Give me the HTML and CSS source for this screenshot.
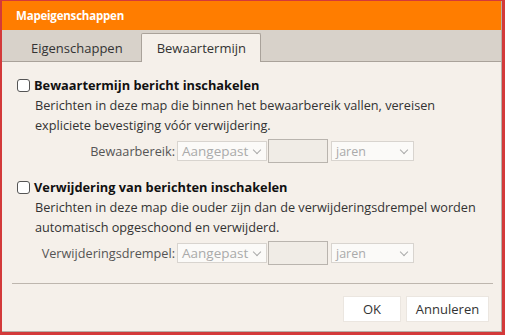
FILE: index.html
```html
<!DOCTYPE html>
<html>
<head>
<meta charset="utf-8">
<link rel="stylesheet" href="styles.css">
</head>
<body>
<div class="frame">
  <div class="dialog">
    <div class="titlebar">Mapeigenschappen</div>
    <div class="tabs">
      <div class="tab">Eigenschappen</div>
      <div class="tab active">Bewaartermijn</div>
    </div>
    <div class="content">
      <div class="section">
        <label class="check"><span class="box"></span><span class="check-label">Bewaartermijn bericht inschakelen</span></label>
        <p class="desc">Berichten in deze map die binnen het bewaarbereik vallen, vereisen expliciete bevestiging vóór verwijdering.</p>
        <div class="row row-1">
          <span class="row-label">Bewaarbereik:</span>
          <span class="select sel-a">Aangepast<span class="chev"></span></span>
          <span class="input"></span>
          <span class="select sel-b">jaren<span class="chev"></span></span>
        </div>
      </div>
      <div class="section">
        <label class="check"><span class="box"></span><span class="check-label">Verwijdering van berichten inschakelen</span></label>
        <p class="desc">Berichten in deze map die ouder zijn dan de verwijderingsdrempel worden automatisch opgeschoond en verwijderd.</p>
        <div class="row row-2">
          <span class="row-label">Verwijderingsdrempel:</span>
          <span class="select sel-a">Aangepast<span class="chev"></span></span>
          <span class="input"></span>
          <span class="select sel-b">jaren<span class="chev"></span></span>
        </div>
      </div>
    </div>
    <div class="footer">
      <button class="btn btn-ok">OK</button>
      <button class="btn btn-cancel">Annuleren</button>
    </div>
  </div>
</div>
</body>
</html>
```

FILE: styles.css
```css
* { box-sizing: border-box; }
html, body { margin: 0; padding: 0; }
body {
  width: 505px;
  height: 335px;
  font-family: "Open Sans", "Noto Sans", sans-serif;
  font-size: 13px;
  color: #222;
  background: #d23a3a;
}
.frame {
  width: 505px;
  height: 335px;
  border-style: solid;
  border-color: #d33a3a;
  border-width: 1px 2px 2px 2px;
}
.dialog {
  width: 500px;
  height: 331px;
  background: #f5f0ea;
  border-right: 1px solid #b8b0a8;
  border-bottom: 1px solid #b8b0a8;
  display: flex;
  flex-direction: column;
}
.titlebar {
  height: 29px;
  background: #ff7d00;
  color: #fff;
  font-weight: bold;
  font-size: 11.5px;
  padding-left: 14px;
  display: flex;
  align-items: center;
  letter-spacing: -0.2px;
}
.tabs {
  height: 32px;
  background: #d8d2ca;
  border-bottom: 1px solid #a9a29a;
  display: flex;
  align-items: flex-end;
  padding-left: 8px;
  gap: 9px;
}
.tab {
  height: 29px;
  font-size: 13px;
  color: #333;
  display: flex;
  align-items: center;
  margin-bottom: -1px;
  border: 1px solid transparent;
  border-bottom: none;
}
.tab:first-child { padding-left: 20px; padding-right: 8px; }
.tab.active {
  background: #f5f0ea;
  border-color: #a9a29a;
  border-radius: 2px 2px 0 0;
  padding: 0 14px 0 15px;
}
.content {
  flex: 1;
  padding: 13px 8px 0 15px;
  display: flex;
  flex-direction: column;
  gap: 14px;
}
.check {
  display: flex;
  align-items: center;
  height: 20px;
}
.box {
  width: 13px;
  height: 13px;
  border: 1px solid #555;
  border-radius: 3px;
  background: #fff;
  margin-right: 4px;
}
.check-label {
  font-weight: bold;
  font-size: 12.8px;
  color: #111;
}
.desc {
  margin: 0 0 0 18px;
  line-height: 20px;
  color: #333;
  font-size: 12.7px;
}
.row {
  display: flex;
  align-items: center;
  height: 24px;
  margin-top: 4px;
}
.row-label {
  text-align: right;
  color: #555;
  margin-right: 2px;
  font-size: 12.7px;
}
.row-1 .row-label { width: 158px; }
.row-2 .row-label { width: 158px; }
.select {
  height: 20px;
  border: 1px solid #d8d4cf;
  background: #fbfaf8;
  color: #aaa;
  display: flex;
  align-items: center;
  padding-left: 4px;
  position: relative;
  font-size: 13.5px;
}
.sel-a { width: 90px; }
.sel-b { width: 83px; margin-left: 3px; font-size: 12.5px; }
.chev {
  position: absolute;
  right: 6px;
  top: 5px;
  width: 6px;
  height: 6px;
  border-right: 1.5px solid #aaa;
  border-bottom: 1.5px solid #aaa;
  transform: rotate(45deg);
}
.input {
  width: 60px;
  height: 24px;
  border: 1px solid #b9b4ae;
  background: #f0ece6;
  margin-left: 1px;
}
.footer {
  margin: 0 8px 0 10px;
  border-top: 1px solid #bdb6ae;
  height: 48px;
  display: flex;
  justify-content: flex-end;
  align-items: center;
  gap: 5px;
  padding-right: 4px;
  padding-top: 2px;
}
.btn {
  font-family: "Open Sans", "Noto Sans", sans-serif;
  font-size: 13px;
  color: #333;
  background: #fff;
  border: 1px solid #ebe6e0;
  height: 26px;
}
.btn-ok { width: 58px; }
.btn-cancel { width: 83px; }
```
